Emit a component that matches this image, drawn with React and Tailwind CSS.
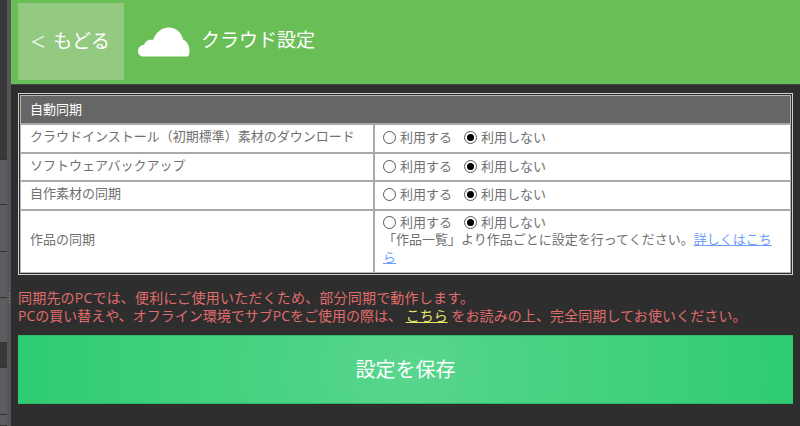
function Radio({ checked }) {
  return (
    <span className="inline-block w-[13px] h-[13px] rounded-full bg-white border border-[#555] relative align-[-2px] mr-[4px]">
      {checked && <span className="absolute left-[2px] top-[2px] w-[7px] h-[7px] rounded-full bg-black" />}
    </span>
  );
}

function Choice() {
  return (
    <div className="h-[18px] leading-[18px] whitespace-nowrap">
      <Radio />利用する
      <span className="ml-[12px]"><Radio checked /></span>利用しない
    </div>
  );
}

function Row({ label, children, h, pb = "pb-[3px]" }) {
  return (
    <div className={`flex border-t-2 border-[#a9a9a9] ${h}`}>
      <div className="w-[352px] shrink-0 pl-[9px] pb-[3px] flex items-center">{label}</div>
      <div className="w-[2px] bg-[#a9a9a9] shrink-0" />
      <div className={`flex-1 pl-[8px] pr-[8px] ${pb} flex flex-col justify-center`}>{children}</div>
    </div>
  );
}

function Side({ h, dark }) {
  return <div className={`${h} shrink-0 border-b border-[#333] ${dark ? "bg-[#38383a]" : "bg-[#5c5c60]"}`} />;
}

export default function App() {
  return (
    <div className="w-[800px] h-[426px] overflow-hidden flex bg-[#2e2e2e] text-[13px] font-['Open_Sans','Noto_Sans_CJK_JP',sans-serif]">
      <div className="w-[7px] shrink-0 flex flex-col">
        <Side h="h-[160px]" dark />
        <Side h="h-[45px]" />
        <Side h="h-[47px]" />
        <Side h="h-[46px]" />
        <Side h="h-[45px]" />
        <Side h="h-[25px]" dark />
        <Side h="h-[47px]" />
        <Side h="h-[11px]" />
      </div>
      <div className="w-[4px] shrink-0 bg-[#565658] flex flex-col items-center pt-[293px] gap-[2px]">
        <span className="w-[1px] h-[1px] bg-[#8a8a8a]" />
        <span className="w-[1px] h-[1px] bg-[#8a8a8a]" />
        <span className="w-[1px] h-[1px] bg-[#8a8a8a]" />
        <span className="w-[1px] h-[1px] bg-[#8a8a8a]" />
      </div>
      <div className="flex-1 flex flex-col min-w-0">
        <div className="h-[85px] shrink-0 bg-[#69bf55] flex items-start pt-[3px] border-b border-[#4a4a4a]">
          <div className="ml-[7px] w-[106px] h-[77px] bg-[#93c981] text-white text-[19px] flex items-center pl-[13px]">
            <span className="text-[25px] font-light mr-[8px] leading-none">&lt;</span>もどる
          </div>
          <svg className="ml-[14px] mt-[24px]" width="52" height="30" viewBox="0 0 52 30">
            <path fill="#fff" d="M5 29.500C2 29.500 0 27 0 24C0 20.500 3 18 6 18C7 14 11 12 15 13C18 4.500 25 0 32 0.500C39 1 44 6.500 45 12.500C49 14.500 51.500 18.500 51.500 23.500C51.500 26 51 28 50 29.500Z" />
          </svg>
          <div className="ml-[11px] mt-[24px] text-white text-[19px] leading-[26px]">クラウド設定</div>
        </div>
        <div className="mt-[8px] mx-[7px] border border-[#d0d0d0] p-[1px]">
          <div className="border border-[#b5b5b5] bg-white text-[#707070]">
            <div className="h-[27px] bg-[#666] text-white flex items-center pl-[9px]">自動同期</div>
            <Row label="クラウドインストール（初期標準）素材のダウンロード" h="h-[29px]"><Choice /></Row>
            <Row label="ソフトウェアバックアップ" h="h-[28px]"><Choice /></Row>
            <Row label="自作素材の同期" h="h-[29px]"><Choice /></Row>
            <Row label="作品の同期" h="h-[63px]" pb="pb-[4px]">
              <Choice />
              <div className="leading-[17.5px]">「作品一覧」より作品ごとに設定を行ってください。<a href="#" className="text-[#6c9eff] underline">詳しくはこちら</a></div>
            </Row>
          </div>
        </div>
        <div className="mt-[14px] ml-[7px] text-[14px] leading-[18px] text-[#e06c6c]">
          <div className="tracking-[0.2px]">同期先のPCでは、便利にご使用いただくため、部分同期で動作します。</div>
          <div>PCの買い替えや、オフライン環境でサブPCをご使用の際は、 <a href="#" className="text-[#e6e66c] underline">こちら</a> <span className="tracking-[0.1px]">をお読みの上、完全同期してお使いください。</span></div>
        </div>
        <div className="mt-[10px] mx-[7px] h-[69px] shrink-0 text-white text-[20px] flex items-center justify-center bg-[radial-gradient(circle,#58d68d,#2ecc71)] border-y border-[#2fb866]">設定を保存</div>
      </div>
    </div>
  );
}
